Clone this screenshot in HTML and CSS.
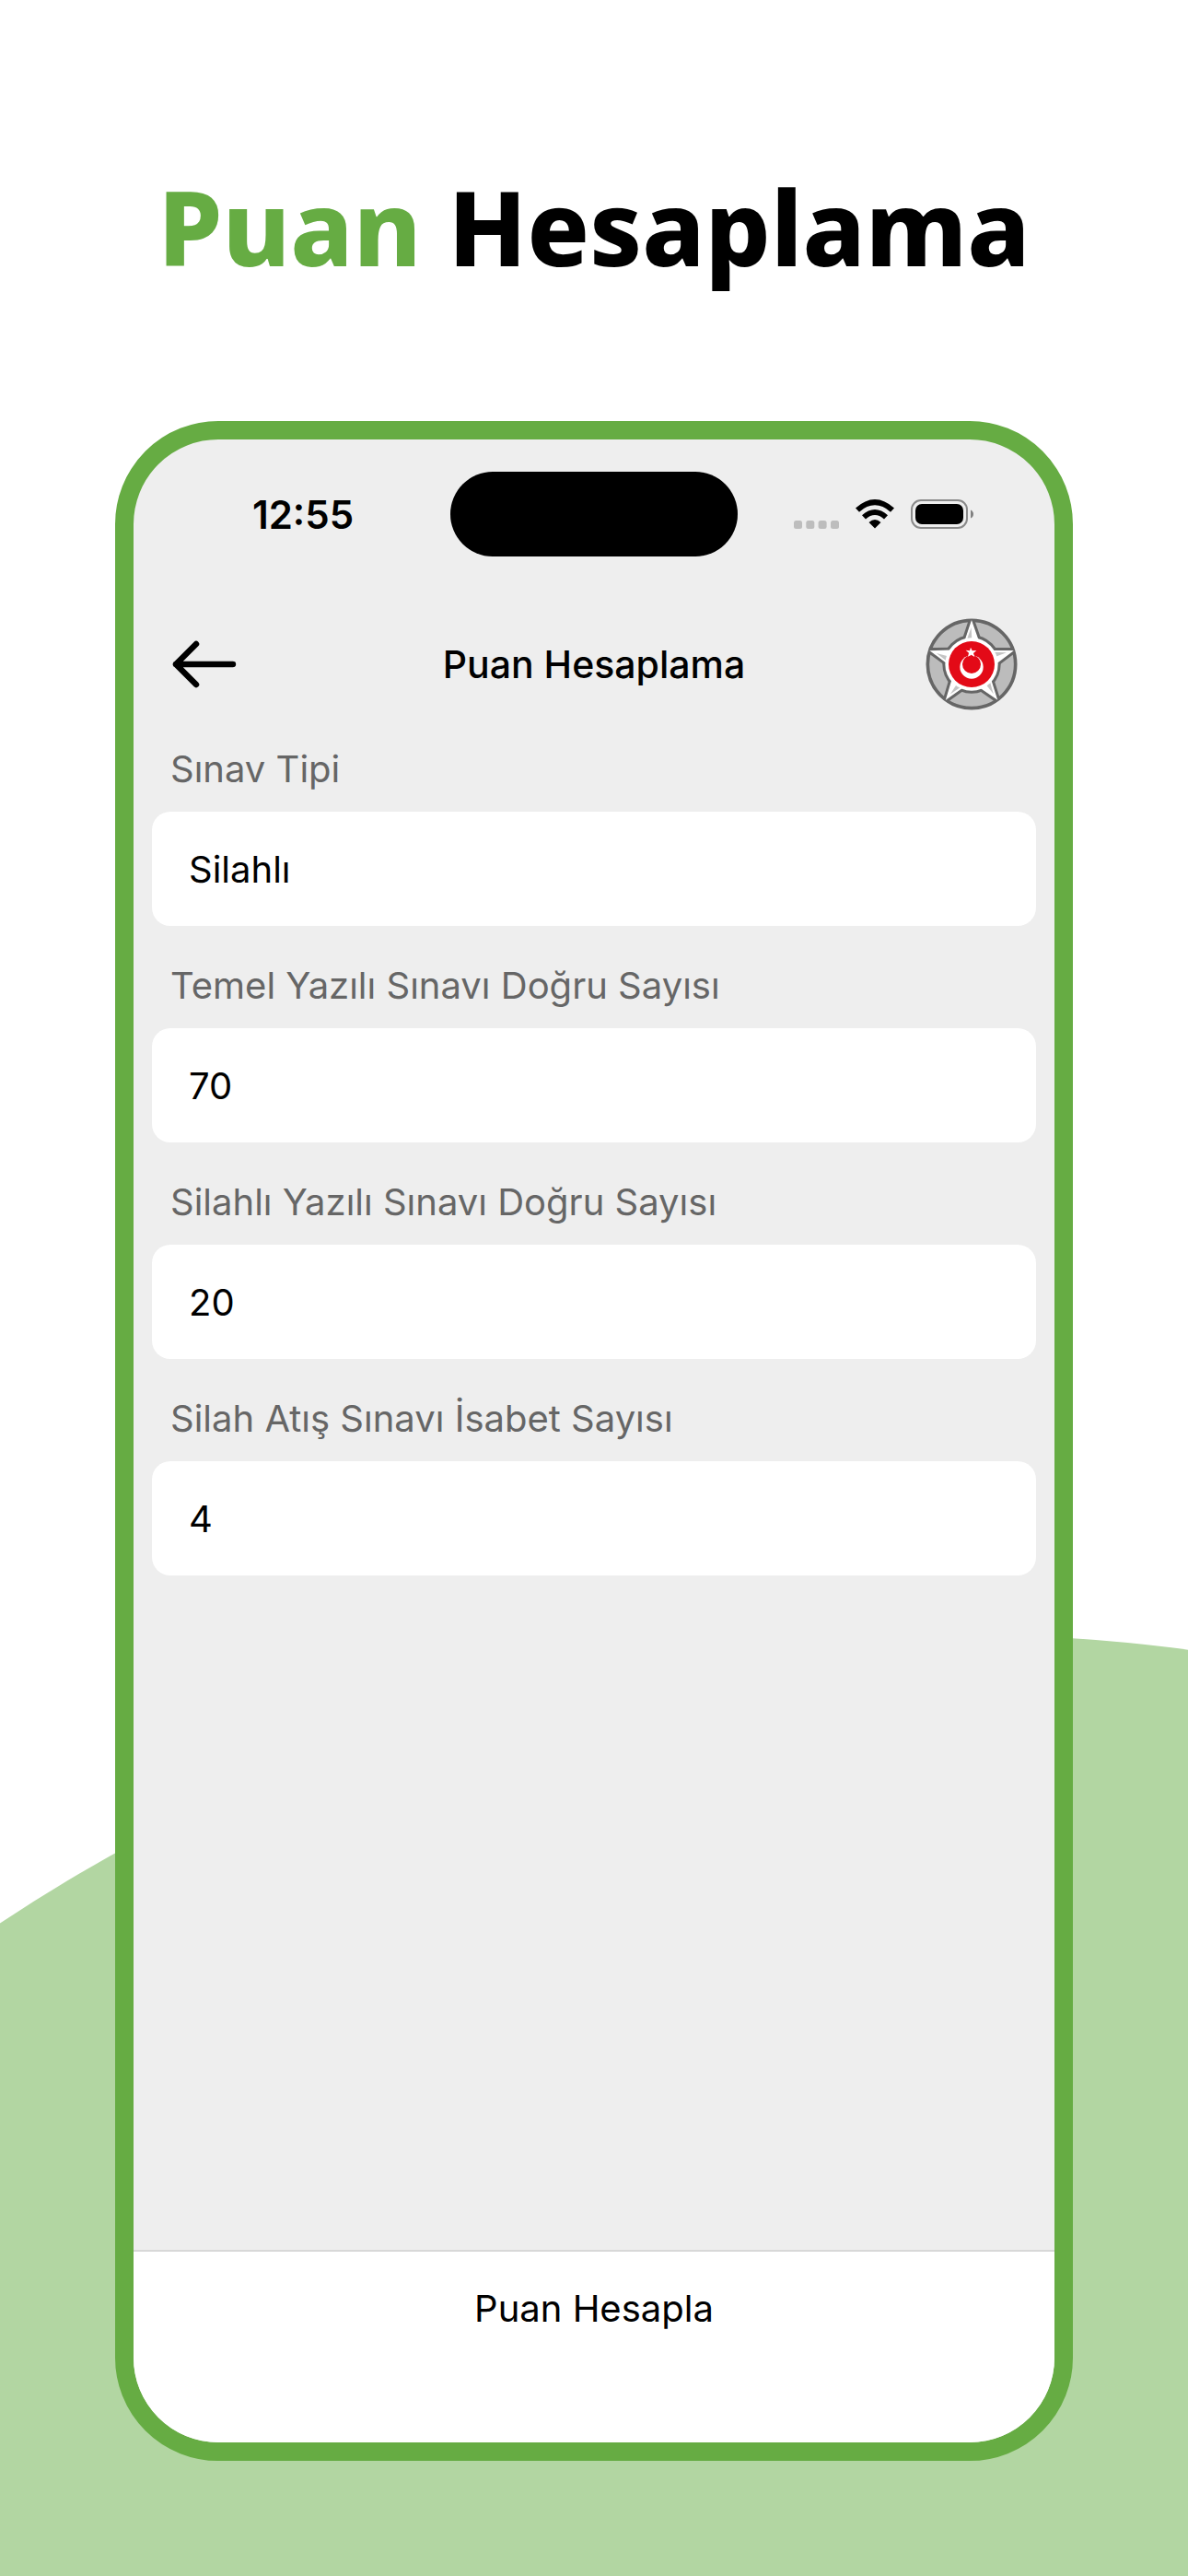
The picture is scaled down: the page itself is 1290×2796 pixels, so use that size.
FILE: index.html
```html
<!DOCTYPE html>
<html lang="tr">

<head>
    <meta charset="UTF-8">
    <meta name="viewport" content="width=device-width, initial-scale=1.0">
    <title>Puan Hesaplama</title>
    <link rel="stylesheet" href="styles.css">
</head>

<body>
    <div class="page">
        <svg class="hill" viewBox="0 0 1290 1022" aria-hidden="true">
            <circle cx="1040" cy="1882" r="1882" />
        </svg>

        <h1 class="headline"><span class="green">Puan</span> Hesaplama</h1>

        <div class="phone">
            <div class="statusbar">
                <span class="time">12:55</span>
                <div class="island"></div>
                <div class="status-icons">
                    <svg width="49" height="32" viewBox="0 0 49 32">
                        <g fill="#bdbdbd">
                            <rect x="0" y="23" width="9" height="9" rx="2.5" />
                            <rect x="13.3" y="23" width="9" height="9" rx="2.5" />
                            <rect x="26.6" y="23" width="9" height="9" rx="2.5" />
                            <rect x="40" y="23" width="9" height="9" rx="2.5" />
                        </g>
                    </svg>
                    <svg width="42" height="32" viewBox="0 0 42 32">
                        <path d="M0 9.5Q21 -9.5 42 9.5L38 13.7Q21 -1 4 13.7Z" />
                        <path d="M7 17.2Q21 4.6 35 17.2L31 21.5Q21 12.6 11 21.5Z" />
                        <path d="M14.5 25Q21 19 27.5 25L21 31.5Z" />
                    </svg>
                    <svg width="68" height="32" viewBox="0 0 68 32">
                        <rect x="1" y="1" width="60" height="30" rx="10" fill="none" stroke="#8a8a8a" stroke-width="2" />
                        <rect x="5" y="5" width="52" height="22" rx="7" />
                        <path d="M65 11.5Q68 13 68 16T65 20.5Z" fill="#808080" />
                    </svg>
                </div>
            </div>

            <header class="navbar">
                <button class="back" type="button" aria-label="Geri">
                    <svg width="72" height="52" viewBox="0 0 72 52">
                        <path d="M28 4L6 26L28 48M6 26H68" fill="none" stroke="#000" stroke-width="6.5" stroke-linecap="round" stroke-linejoin="round" />
                    </svg>
                </button>
                <h2 class="title">Puan Hesaplama</h2>
                <svg class="emblem" width="100" height="100" viewBox="77 62 300 300">
                    <defs>
                        <path id="arm" d="M227 74L207 134H248Z" />
                        <path id="shade" d="M226 92L210 136H228Z" />
                    </defs>
                    <circle cx="227" cy="212" r="143" fill="#bcbcbc" stroke="#666" stroke-width="11" />
                    <!-- star outline -->
                    <g fill="#666" stroke="#666" stroke-width="22" stroke-linejoin="bevel">
                        <circle cx="227" cy="212" r="84" />
                        <use href="#arm" />
                        <use href="#arm" transform="rotate(72 227 212)" />
                        <use href="#arm" transform="rotate(144 227 212)" />
                        <use href="#arm" transform="rotate(216 227 212)" />
                        <use href="#arm" transform="rotate(288 227 212)" />
                    </g>
                    <g fill="#fff" stroke="#fff" stroke-width="4">
                        <use href="#arm" />
                        <use href="#arm" transform="rotate(72 227 212)" />
                        <use href="#arm" transform="rotate(144 227 212)" />
                        <use href="#arm" transform="rotate(216 227 212)" />
                        <use href="#arm" transform="rotate(288 227 212)" />
                    </g>
                    <g fill="#c4c4c4">
                        <use href="#shade" />
                        <use href="#shade" transform="rotate(72 227 212)" />
                        <use href="#shade" transform="rotate(144 227 212)" />
                        <use href="#shade" transform="rotate(216 227 212)" />
                        <use href="#shade" transform="rotate(288 227 212)" />
                    </g>
                    <circle cx="227" cy="212" r="86" fill="#fff" />
                    <circle cx="227" cy="212" r="75" fill="#e30a17" />
                    <circle cx="227" cy="221" r="38" fill="#fff" />
                    <circle cx="227" cy="212" r="30" fill="#e30a17" />
                    <path d="M224 157L229 168L243 167L233 176L237 188L226 181L215 187L218 175L208 166L221 168Z" fill="#fff" />
                </svg>
            </header>

            <form class="form" id="scoreForm">
                <label class="label" for="examType">Sınav Tipi</label>
                <select class="field" id="examType">
                    <option>Silahlı</option>
                </select>

                <label class="label" for="basic">Temel Yazılı Sınavı Doğru Sayısı</label>
                <input class="field" id="basic" type="text" inputmode="numeric" value="70">

                <label class="label" for="armed">Silahlı Yazılı Sınavı Doğru Sayısı</label>
                <input class="field" id="armed" type="text" inputmode="numeric" value="20">

                <label class="label" for="shots">Silah Atış Sınavı İsabet Sayısı</label>
                <input class="field" id="shots" type="text" inputmode="numeric" value="4">
            </form>

            <button class="submit" type="submit" form="scoreForm">Puan Hesapla</button>
        </div>
    </div>
</body>

</html>
```
FILE: styles.css
```css
* {
    margin: 0;
    padding: 0;
    box-sizing: border-box;
}

body {
    background-color: #fff;
    font-family: Inter, Roboto, sans-serif;
    color: #000;
}

.page {
    position: relative;
    min-height: 100vh;
    padding: 160px 125px 125px;
    display: flex;
    flex-direction: column;
    overflow: hidden;
}

/* light green hill behind the phone */
.hill {
    position: absolute;
    left: 0;
    bottom: 0;
    width: 100%;
    fill: #b2d6a2;
}

.headline {
    position: relative;
    height: 297px;
    font-family: "Noto Sans", "Open Sans", sans-serif;
    font-size: 112px;
    font-weight: 800;
    line-height: 172px;
    text-align: center;
    white-space: nowrap;
}

.green {
    color: #66ac43;
}

.phone {
    position: relative;
    flex: 1;
    display: flex;
    flex-direction: column;
    border: 20px solid #66ac43;
    border-radius: 112px;
    background-color: #eee;
    overflow: hidden;
}

.statusbar {
    height: 162px;
    display: grid;
    grid-template-columns: 1fr 312px 1fr;
    align-items: center;
}

.time {
    padding-left: 24px;
    font-size: 42px;
    font-weight: 600;
    text-align: center;
}

.island {
    height: 92px;
    border-radius: 46px;
    background-color: #000;
}

.status-icons {
    display: flex;
    justify-content: flex-end;
    gap: 18px;
    padding-right: 88px;
}

.navbar {
    height: 164px;
    padding: 0 40px;
    display: flex;
    align-items: center;
    justify-content: space-between;
}

.back {
    width: 100px;
    height: 100px;
    display: flex;
    align-items: center;
    border: none;
    background: none;
}

.title {
    font-size: 41px;
    font-weight: 500;
}

.form {
    flex: 1;
    padding: 0 20px;
    display: flex;
    flex-direction: column;
}

.label {
    padding: 6px 20px 20px;
    font-size: 40px;
    line-height: 52px;
    color: #666;
}

.field {
    width: 100%;
    height: 124px;
    margin-bottom: 33px;
    padding: 0 40px;
    border: none;
    border-radius: 20px;
    background-color: #fff;
    font-family: inherit;
    font-size: 40px;
    color: #000;
    appearance: none;
}

.submit {
    height: 209px;
    padding-bottom: 84px;
    border: none;
    border-top: 2px solid #d8d8d8;
    background-color: #fff;
    font-family: inherit;
    font-size: 40px;
    color: #000;
}
```
